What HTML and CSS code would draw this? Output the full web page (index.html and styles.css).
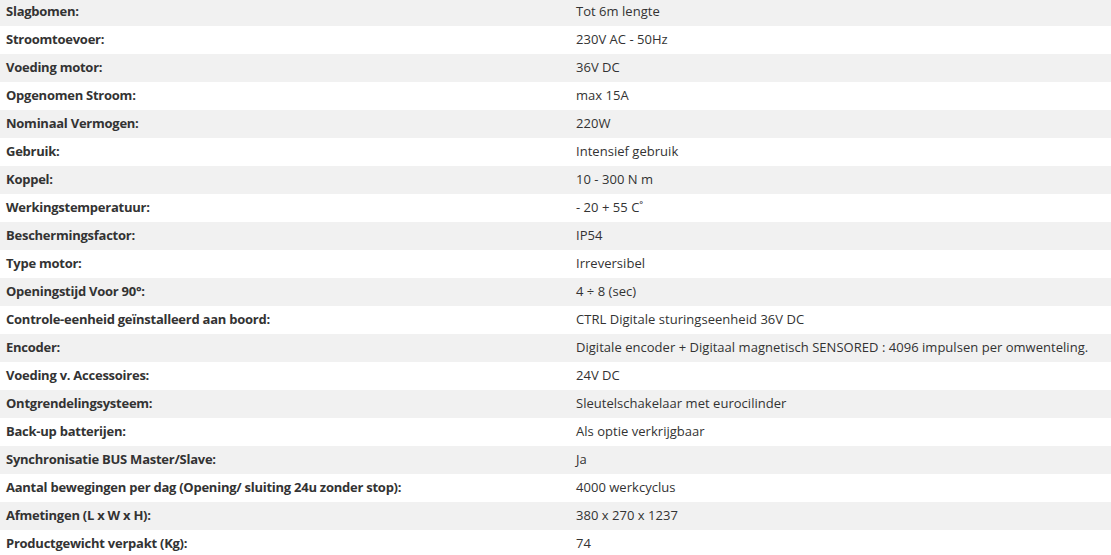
FILE: index.html
```html
<!DOCTYPE html>
<html lang="nl">
<head>
<meta charset="utf-8">
<title>Specificaties</title>
<link rel="stylesheet" href="styles.css">
</head>
<body>
<table class="specs">
<tbody>
<tr><td class="k">Slagbomen:</td><td class="v">Tot 6m lengte</td></tr>
<tr><td class="k">Stroomtoevoer:</td><td class="v">230V AC - 50Hz</td></tr>
<tr><td class="k">Voeding motor:</td><td class="v">36V DC</td></tr>
<tr><td class="k">Opgenomen Stroom:</td><td class="v">max 15A</td></tr>
<tr><td class="k">Nominaal Vermogen:</td><td class="v">220W</td></tr>
<tr><td class="k">Gebruik:</td><td class="v">Intensief gebruik</td></tr>
<tr><td class="k">Koppel:</td><td class="v">10 - 300 N m</td></tr>
<tr><td class="k">Werkingstemperatuur:</td><td class="v">- 20 + 55 C˚</td></tr>
<tr><td class="k">Beschermingsfactor:</td><td class="v">IP54</td></tr>
<tr><td class="k">Type motor:</td><td class="v">Irreversibel</td></tr>
<tr><td class="k">Openingstijd Voor 90°:</td><td class="v">4 ÷ 8 (sec)</td></tr>
<tr><td class="k">Controle-eenheid geïnstalleerd aan boord:</td><td class="v">CTRL Digitale sturingseenheid 36V DC</td></tr>
<tr><td class="k">Encoder:</td><td class="v">Digitale encoder + Digitaal magnetisch SENSORED : 4096 impulsen per omwenteling.</td></tr>
<tr><td class="k">Voeding v. Accessoires:</td><td class="v">24V DC</td></tr>
<tr><td class="k">Ontgrendelingsysteem:</td><td class="v">Sleutelschakelaar met eurocilinder</td></tr>
<tr><td class="k">Back-up batterijen:</td><td class="v">Als optie verkrijgbaar</td></tr>
<tr><td class="k">Synchronisatie BUS Master/Slave:</td><td class="v">Ja</td></tr>
<tr><td class="k">Aantal bewegingen per dag (Opening/ sluiting 24u zonder stop):</td><td class="v">4000 werkcyclus</td></tr>
<tr><td class="k">Afmetingen (L x W x H):</td><td class="v">380 x 270 x 1237</td></tr>
<tr><td class="k">Productgewicht verpakt (Kg):</td><td class="v">74</td></tr>
</tbody>
</table>
</body>
</html>
```
FILE: styles.css
```css
html, body {
  margin: 0;
  padding: 0;
  background: #ffffff;
}
body {
  font-family: "Open Sans", "Liberation Sans", sans-serif;
  font-size: 13px;
  color: #333333;
}
.specs {
  width: 1111px;
  border-collapse: collapse;
  margin-top: -2px;
  table-layout: fixed;
}
.specs tr {
  height: 28px;
}
.specs tr:nth-child(odd) {
  background: #f1f1f1;
}
.specs td {
  padding: 0 6px 2px;
  vertical-align: middle;
  white-space: nowrap;
  line-height: 26px;
  height: 26px;
}
.specs td.k {
  width: 558px;
  font-weight: 700;
  letter-spacing: -0.25px;
}
.specs td.v {
  font-weight: 400;
  letter-spacing: 0.03px;
}
```
